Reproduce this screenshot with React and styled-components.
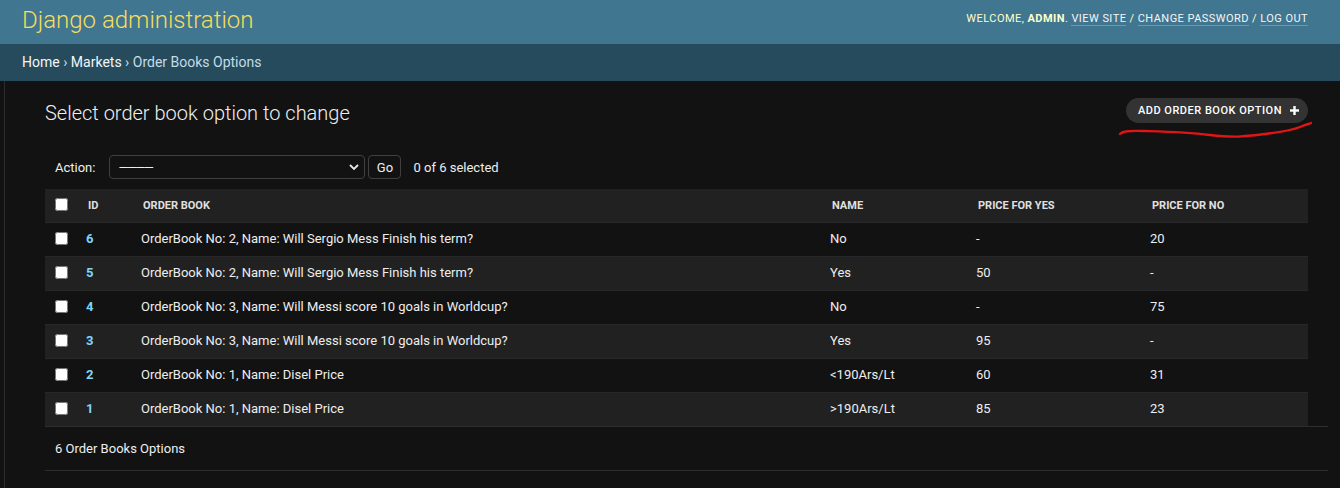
import React from 'react';
import styled, { createGlobalStyle } from 'styled-components';

const GlobalStyle = createGlobalStyle`
  html, body { margin: 0; padding: 0; background: #121212; height: 100%; }
  body {
    font-family: Roboto, "Liberation Sans", Arial, sans-serif;
    color: #eeeeee;
    font-size: 14px;
  }
  #root { min-height: 100%; display: flex; flex-direction: column; }
`;

const Header = styled.header`
  background: #417690;
  height: 44px;
  box-sizing: border-box;
  padding: 6px 32px 0 22px;
  display: flex;
  justify-content: space-between;
  align-items: flex-start;
`;

const Branding = styled.div`
  font-size: 24px;
  font-weight: 300;
  line-height: 28px;
  color: #f5dd5d;
`;

const UserTools = styled.div`
  margin-top: 6px;
  font-size: 11px;
  line-height: 13px;
  letter-spacing: 0.45px;
  text-transform: uppercase;
  color: #ffffcc;
`;

const Strong = styled.strong`
  font-weight: 700;
`;

const ToolLink = styled.a`
  color: #f5f5f5;
  text-decoration: none;
  border-bottom: 1px solid rgba(255, 255, 255, 0.25);
`;

const Breadcrumbs = styled.nav`
  background: #264b5d;
  padding: 10px 22px 10px;
  font-size: 14px;
  line-height: 17px;
  color: #c4dce8;
`;

const Crumb = styled.a`
  color: #f5f5f5;
  text-decoration: none;
`;

const Body = styled.div`
  display: flex;
  flex: 1;
`;

const SidebarToggle = styled.div`
  flex: 0 0 4px;
  border-right: 1px solid #2c2c2c;
`;

const Content = styled.main`
  flex: 1;
  min-width: 0;
  padding: 17px 12px 0 40px;
`;

const TitleRow = styled.div`
  position: relative;
  display: flex;
  justify-content: space-between;
  align-items: flex-start;
  margin-right: 20px;
`;

const PageTitle = styled.h1`
  margin: 3px 0 0;
  font-size: 20px;
  font-weight: 300;
  line-height: 24px;
  color: #f0f0f0;
`;

const AddButton = styled.a`
  display: inline-flex;
  align-items: center;
  gap: 8px;
  height: 25px;
  box-sizing: border-box;
  padding: 0 9px 0 12px;
  border-radius: 15px;
  background: #333333;
  color: #ffffff;
  font-size: 11px;
  font-weight: 500;
  letter-spacing: 0.5px;
  text-transform: uppercase;
  text-decoration: none;
`;

const Scribble = styled.svg`
  position: absolute;
  right: -7px;
  top: 20px;
  pointer-events: none;
`;

const Actions = styled.div`
  display: flex;
  align-items: center;
  height: 24px;
  margin-top: 30px;
  padding-left: 10px;
  font-size: 13px;
  color: #eeeeee;
`;

const ActionLabel = styled.label`
  margin-right: 14px;
`;

const SelectWrap = styled.span`
  position: relative;
  display: inline-block;
  width: 256px;
  height: 24px;
`;

const Select = styled.select`
  appearance: none;
  width: 100%;
  height: 100%;
  box-sizing: border-box;
  background: #121212;
  color: #eeeeee;
  border: 1px solid #3f3f3f;
  border-radius: 4px;
  padding: 0 24px 0 8px;
  font: 13px Roboto, "Liberation Sans", Arial, sans-serif;
  letter-spacing: -1.7px;
  outline: none;
`;

const Chevron = styled.svg`
  position: absolute;
  right: 6px;
  top: 9px;
  pointer-events: none;
`;

const GoButton = styled.button`
  margin-left: 3px;
  width: 33px;
  height: 24px;
  box-sizing: border-box;
  background: #121212;
  color: #eeeeee;
  border: 1px solid #3f3f3f;
  border-radius: 4px;
  font: 13px Roboto, "Liberation Sans", Arial, sans-serif;
  padding: 0;
`;

const Counter = styled.span`
  margin-left: 12px;
`;

const Table = styled.table`
  margin-top: 10px;
  width: 1263px;
  table-layout: fixed;
  border-collapse: collapse;
  font-size: 13px;
`;

const HeadCell = styled.th`
  height: 33px;
  padding: 0 0 0 10px;
  background: #212121;
  text-align: left;
  font-size: 11px;
  font-weight: 700;
  text-transform: uppercase;
  color: #e0e0e0;
  vertical-align: middle;
`;

const Row = styled.tr`
  background: ${p => (p.$alt ? '#212121' : '#121212')};
`;

const Cell = styled.td`
  height: 31px;
  padding: 0 0 2px ${p => (p.$check ? '10px' : '8px')};
  border-top: 1px solid #272727;
  color: #eeeeee;
  vertical-align: middle;
  white-space: nowrap;
  overflow: hidden;
`;

const IdLink = styled.a`
  color: #81d4fa;
  font-weight: 700;
  text-decoration: none;
`;

const Checkbox = styled.input.attrs({ type: 'checkbox' })`
  margin: 0;
  width: 13px;
  height: 13px;
  vertical-align: middle;
  position: relative;
  top: -1px;
`;

const Paginator = styled.p`
  margin: 0;
  border-top: 1px solid #2e2e2e;
  border-bottom: 1px solid #2e2e2e;
  padding: 11px 10px 10px;
  line-height: 22px;
  font-size: 13px;
  color: #eeeeee;
`;

const rows = [
  { id: 6, book: 'OrderBook No: 2, Name: Will Sergio Mess Finish his term?', name: 'No', yes: '-', no: '20' },
  { id: 5, book: 'OrderBook No: 2, Name: Will Sergio Mess Finish his term?', name: 'Yes', yes: '50', no: '-' },
  { id: 4, book: 'OrderBook No: 3, Name: Will Messi score 10 goals in Worldcup?', name: 'No', yes: '-', no: '75' },
  { id: 3, book: 'OrderBook No: 3, Name: Will Messi score 10 goals in Worldcup?', name: 'Yes', yes: '95', no: '-' },
  { id: 2, book: 'OrderBook No: 1, Name: Disel Price', name: '<190Ars/Lt', yes: '60', no: '31' },
  { id: 1, book: 'OrderBook No: 1, Name: Disel Price', name: '>190Ars/Lt', yes: '85', no: '23' },
];

const widths = [33, 55, 689, 146, 174, 166];

export default function App() {
  return (
    <>
      <GlobalStyle />
      <Header>
        <Branding>Django administration</Branding>
        <UserTools>
          Welcome, <Strong>admin</Strong>. <ToolLink href="#">View site</ToolLink> /{' '}
          <ToolLink href="#">Change password</ToolLink> / <ToolLink href="#">Log out</ToolLink>
        </UserTools>
      </Header>
      <Breadcrumbs>
        <Crumb href="#">Home</Crumb> › <Crumb href="#">Markets</Crumb> › Order Books Options
      </Breadcrumbs>
      <Body>
        <SidebarToggle />
        <Content>
          <TitleRow>
            <PageTitle>Select order book option to change</PageTitle>
            <AddButton href="#">
              Add order book option
              <svg width="9" height="9" viewBox="0 0 9 9">
                <rect x="3.3" y="0" width="2.4" height="9" fill="#fff" />
                <rect x="0" y="3.3" width="9" height="2.4" fill="#fff" />
              </svg>
            </AddButton>
            <Scribble width="200" height="25" viewBox="0 0 200 25">
              <path
                d="M5 16 C 8 13, 14 12.5, 30 13 S 70 14, 95 17 S 130 18.5, 150 16 S 178 12, 185 9 S 194 6, 196 5"
                fill="none"
                stroke="#e01515"
                strokeWidth="2.4"
                strokeLinecap="round"
              />
            </Scribble>
          </TitleRow>
          <Actions>
            <ActionLabel>Action:</ActionLabel>
            <SelectWrap>
              <Select defaultValue="">
                <option value="">————</option>
                <option value="delete">Delete selected order books options</option>
              </Select>
              <Chevron width="10" height="6" viewBox="0 0 10 6">
                <polyline points="1,1 5,5 9,1" fill="none" stroke="#e8e8e8" strokeWidth="1.8" />
              </Chevron>
            </SelectWrap>
            <GoButton>Go</GoButton>
            <Counter>0 of 6 selected</Counter>
          </Actions>
          <Table>
            <colgroup>
              {widths.map((w, i) => (
                <col key={i} style={{ width: w }} />
              ))}
            </colgroup>
            <thead>
              <tr>
                <HeadCell><Checkbox /></HeadCell>
                <HeadCell>Id</HeadCell>
                <HeadCell>Order book</HeadCell>
                <HeadCell>Name</HeadCell>
                <HeadCell>Price for yes</HeadCell>
                <HeadCell>Price for no</HeadCell>
              </tr>
            </thead>
            <tbody>
              {rows.map((r, i) => (
                <Row key={r.id} $alt={i % 2 === 1}>
                  <Cell $check><Checkbox /></Cell>
                  <Cell><IdLink href="#">{r.id}</IdLink></Cell>
                  <Cell>{r.book}</Cell>
                  <Cell>{r.name}</Cell>
                  <Cell>{r.yes}</Cell>
                  <Cell>{r.no}</Cell>
                </Row>
              ))}
            </tbody>
          </Table>
          <Paginator>6 Order Books Options</Paginator>
        </Content>
      </Body>
    </>
  );
}
